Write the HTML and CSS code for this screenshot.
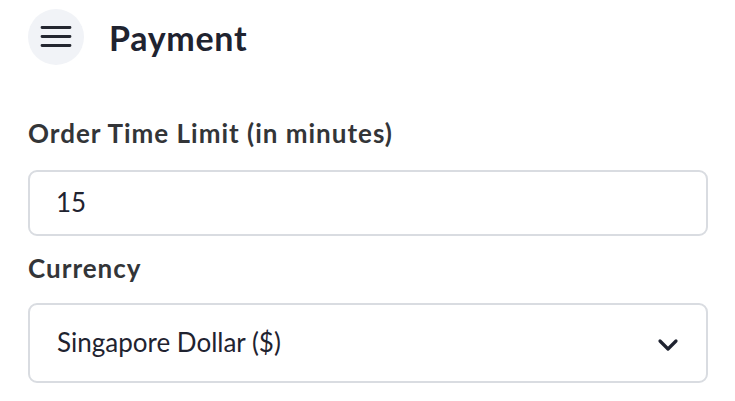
FILE: index.html
```html
<!DOCTYPE html>
<html>
<head>
<meta charset="utf-8">
<link rel="stylesheet" href="styles.css">
</head>
<body>
<div class="page">
  <header class="header">
    <button class="menu-btn" aria-label="Menu">
      <svg width="32" height="32" viewBox="0 0 32 32" fill="none" stroke="currentColor" stroke-width="2.8" stroke-linecap="round">
        <path d="M2 6.5h28M2 15.5h28M2 24.5h28"/>
      </svg>
    </button>
    <h1 class="title">Payment</h1>
  </header>
  <div class="field field-first">
    <label class="label">Order Time Limit (in minutes)</label>
    <div class="input">15</div>
  </div>
  <div class="field field-second">
    <label class="label">Currency</label>
    <div class="select">
      <span>Singapore Dollar ($)</span>
      <svg class="chev" width="22" height="16" viewBox="0 0 22 16" fill="none" stroke="currentColor" stroke-width="3.2" stroke-linecap="round" stroke-linejoin="round">
        <path d="M3 4l8 8 8-8"/>
      </svg>
    </div>
  </div>
</div>
</body>
</html>
```

FILE: styles.css
```css
* { box-sizing: border-box; }
html, body { margin: 0; padding: 0; background: #fff; }
body { font-family: Lato, "Noto Sans", sans-serif; color: #1f2330; }
.page { padding: 9px 27px 0 28px; }
.header { display: flex; align-items: center; gap: 25px; height: 56px; }
.menu-btn {
  width: 56px; height: 56px; border-radius: 50%; border: 0;
  background: #f1f3f7; color: #23262f; display: flex; align-items: center; justify-content: center; padding: 0;
}
.title { margin: 0; font-size: 34px; font-weight: 700; letter-spacing: 0.7px; color: #1f2330; }
.field { display: flex; flex-direction: column; }
.label { font-size: 26px; font-weight: 700; letter-spacing: 1px; color: #333538; line-height: 30px; }
.field-first { margin-top: 53px; }
.field-first .label { margin-bottom: 22px; }
.field-second { margin-top: 17px; }
.field-second .label { margin-bottom: 20px; }
.input {
  height: 66px; border: 2px solid #d9dce1; border-radius: 9px;
  display: flex; align-items: center; padding: 0 0 3px 26px;
  font-size: 26px; color: #1f2330;
}
.select {
  height: 80px; border: 2px solid #d9dce1; border-radius: 9px;
  display: flex; align-items: center; justify-content: space-between;
  padding: 0 27px 2px 27px; font-size: 26px; color: #1f2330;
}
.chev { color: #1f2330; margin-top: 6px; }
```
